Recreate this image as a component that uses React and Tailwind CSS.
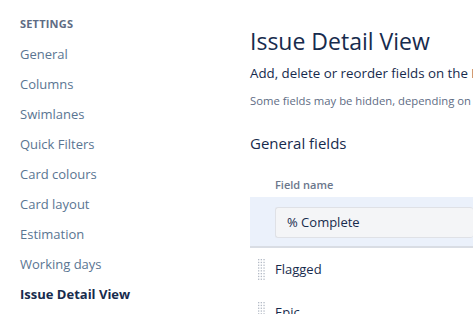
import React from "react";

const font = { fontFamily: '"Open Sans", "Noto Sans", sans-serif' };

function Handle() {
  return (
    <svg width="8" height="22" viewBox="0 0 8 22" className="shrink-0">
      {Array.from({ length: 8 }).map((_, r) =>
        [0, 1, 2].map((c) => (
          <rect key={`${r}-${c}`} x={c * 2.7} y={r * 2.8} width="1.3" height="1.3" fill="#b3bac5" />
        ))
      )}
    </svg>
  );
}

export default function App() {
  const nav = [
    "General",
    "Columns",
    "Swimlanes",
    "Quick Filters",
    "Card colours",
    "Card layout",
    "Estimation",
    "Working days",
  ];
  return (
    <div className="flex w-[473px] h-[314px] overflow-hidden bg-white" style={font}>
      <div className="w-[250px] shrink-0 pl-5 pt-4">
        <div className="text-[11px] leading-[16px] font-bold text-[#5e6c84] tracking-[0.2px]">SETTINGS</div>
        <div className="mt-[8px] flex flex-col">
          {nav.map((n) => (
            <div key={n} className="h-[30px] flex items-center text-[13px] text-[#5a7592]">
              {n}
            </div>
          ))}
          <div className="h-[30px] flex items-center text-[13px] font-bold text-[#172b4d]">Issue Detail View</div>
        </div>
      </div>
      <div className="flex-1 min-w-0 pt-[25px] whitespace-nowrap">
        <div className="text-[23px] leading-[32px] font-medium text-[#172b4d]">Issue Detail View</div>
        <div className="mt-[6px] text-[13.3px] leading-[20px] text-[#172b4d]">
          Add, delete or reorder fields on the Issue Detail View.
        </div>
        <div className="mt-[10px] text-[11.3px] leading-[16px] text-[#5e6c84]">
          Some fields may be hidden, depending on your configuration.
        </div>
        <div className="mt-[22px] text-[15px] leading-[24px] font-medium text-[#172b4d]">General fields</div>
        <div className="mt-[22px] pl-[25px] text-[11px] leading-[16px] font-semibold text-[#6b778c]">Field name</div>
        <div className="mt-[4px] h-[51px] bg-[#ebf1fb] border-b-2 border-[#d9dde4] pl-[25px] pt-[10px]">
          <div className="h-[31px] bg-[#f4f5f7] border border-[#dfe1e6] rounded-[3px] border-r-0 flex items-center pl-[11px] text-[13px] text-[#172b4d]">
            % Complete
          </div>
        </div>
        <div className="h-[43px] flex items-center pl-[8px] gap-[9px] text-[13px] text-[#172b4d]">
          <Handle />
          <span>Flagged</span>
        </div>
        <div className="h-[44px] flex items-center pl-[8px] gap-[9px] text-[13px] text-[#172b4d]">
          <Handle />
          <span>Epic</span>
        </div>
      </div>
    </div>
  );
}
